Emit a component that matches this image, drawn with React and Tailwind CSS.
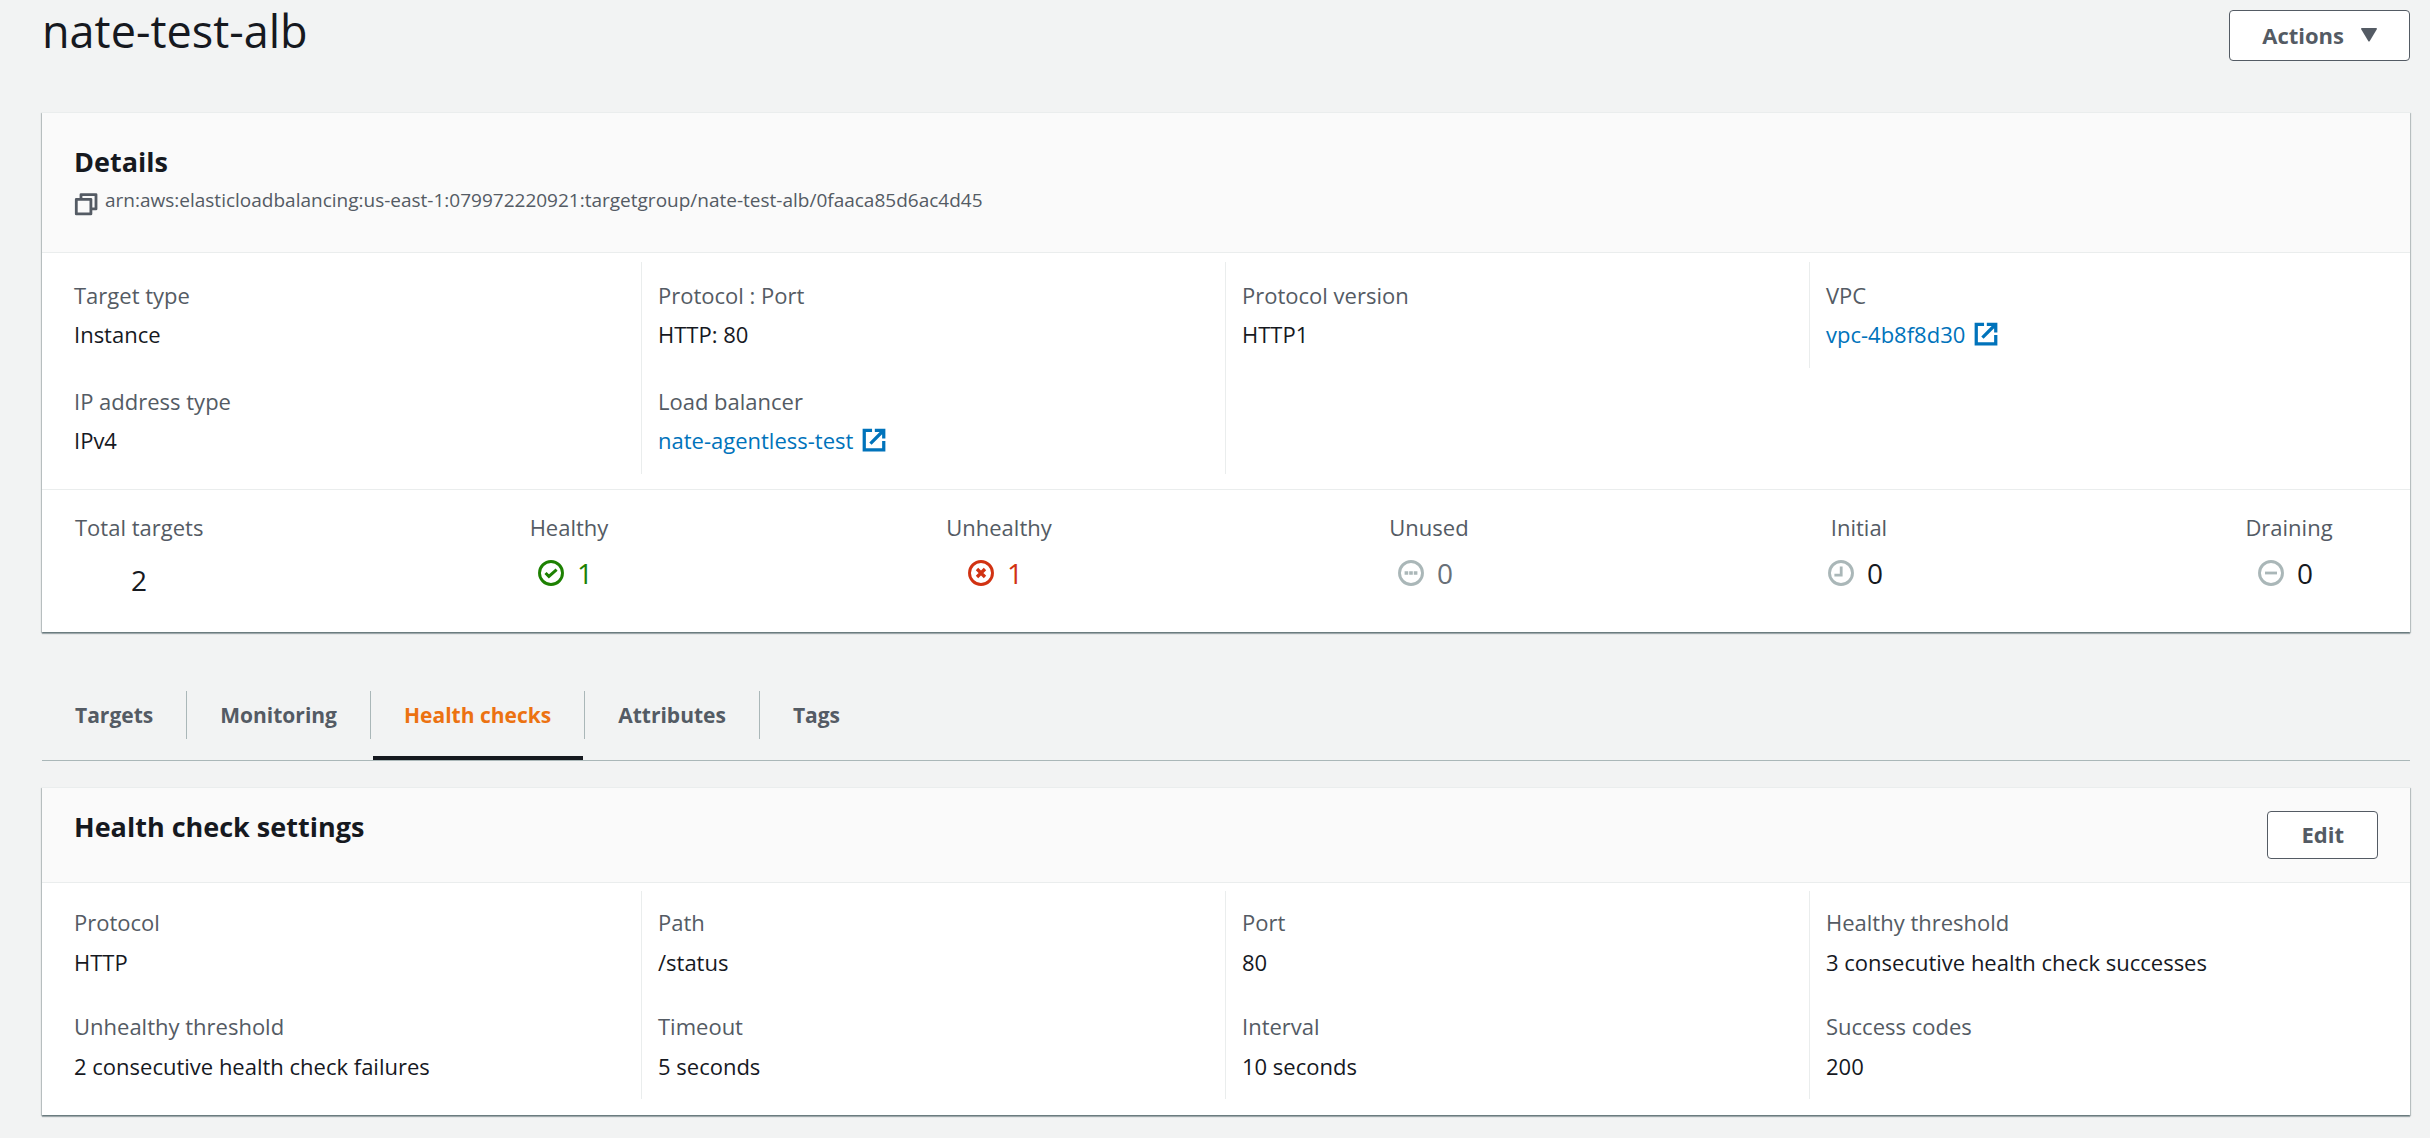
const detailItems = [
  { label: 'Target type', value: 'Instance' },
  { label: 'Protocol : Port', value: 'HTTP: 80' },
  { label: 'Protocol version', value: 'HTTP1' },
  { label: 'VPC', value: 'vpc-4b8f8d30', link: true },
  { label: 'IP address type', value: 'IPv4' },
  { label: 'Load balancer', value: 'nate-agentless-test', link: true },
  null,
];

const healthItems = [
  { label: 'Protocol', value: 'HTTP' },
  { label: 'Path', value: '/status' },
  { label: 'Port', value: '80' },
  { label: 'Healthy threshold', value: '3 consecutive health check successes' },
  { label: 'Unhealthy threshold', value: '2 consecutive health check failures' },
  { label: 'Timeout', value: '5 seconds' },
  { label: 'Interval', value: '10 seconds' },
  { label: 'Success codes', value: '200' },
];

const stats = [
  { label: 'Healthy', value: 1, icon: 'check', iconColor: 'text-[#1d8102]', color: 'text-[#1d8102]' },
  { label: 'Unhealthy', value: 1, icon: 'cross', iconColor: 'text-[#d13212]', color: 'text-[#d13212]' },
  { label: 'Unused', value: 0, icon: 'dots', iconColor: 'text-[#aab7b8]', color: 'text-[#687078]' },
  { label: 'Initial', value: 0, icon: 'clock', iconColor: 'text-[#aab7b8]', color: 'text-[#16191f]' },
  { label: 'Draining', value: 0, icon: 'minus', iconColor: 'text-[#aab7b8]', color: 'text-[#16191f]' },
];

const tabs = ['Targets', 'Monitoring', 'Health checks', 'Attributes', 'Tags'];

const glyphs = {
  check: <path d="M7.5 13l3.4 3.4L18.6 9.6" strokeWidth="3" />,
  cross: <path d="M9 9l8 8M17 9l-8 8" strokeWidth="3.4" />,
  dots: <path d="M6.6 13h3.6M11.2 13h3.6M15.8 13h3.6" strokeWidth="3.4" />,
  clock: <path d="M13.2 6.4v8.8M14.6 15.2H6.4" strokeWidth="2.8" />,
  minus: <path d="M7 13h12" strokeWidth="2.8" />,
};

function StatusIcon({ name, className }) {
  return (
    <svg aria-hidden="true" className={`size-[26px] ${className}`} viewBox="0 0 26 26" fill="none" stroke="currentColor">
      <circle cx="13" cy="13" r="11.5" strokeWidth="2.9" />
      {glyphs[name]}
    </svg>
  );
}

function ExternalIcon() {
  return (
    <svg aria-hidden="true" className="size-[26px]" viewBox="0 0 16 16" fill="none" stroke="currentColor" strokeWidth="2">
      <path d="M6.8 2H2v12h12V8.6" />
      <path d="M8.5 2H14v5M14 2L5.8 10.2" />
    </svg>
  );
}

function CopyIcon() {
  return (
    <svg aria-hidden="true" className="size-6" viewBox="0 0 24 24" fill="none" stroke="currentColor" strokeWidth="2.8" strokeLinejoin="round">
      <rect x="2.3" y="7.3" width="14.6" height="14.6" />
      <path d="M7 6.5V2.6h15v14.3h-4" />
    </svg>
  );
}

function Card({ children }) {
  return (
    <section className="border-t border-[#eaeded] bg-white shadow-[0_2px_1px_0_rgba(0,28,36,0.3),1px_1px_1px_0_rgba(0,28,36,0.2),-1px_1px_1px_0_rgba(0,28,36,0.2)]">
      {children}
    </section>
  );
}

function Field({ item, className }) {
  return (
    <div className={`border-l border-[#eaeded] px-4 ${className}`}>
      {item && (
        <>
          <dt className="text-[#545b64]">{item.label}</dt>
          <dd>
            {item.link ? (
              <a href="#" className="inline-flex items-center gap-2 text-[#0073bb]">
                {item.value}
                <ExternalIcon />
              </a>
            ) : (
              item.value
            )}
          </dd>
        </>
      )}
    </div>
  );
}

function FieldGrid({ items, className, fieldClassName }) {
  return (
    <dl className={`grid grid-cols-4 pr-[17px] pl-[15px] ${className}`}>
      {items.map((item, i) => (
        <Field
          key={i}
          item={item}
          className={`${fieldClassName} ${i % 4 === 0 ? 'border-l-transparent' : ''}`}
        />
      ))}
    </dl>
  );
}

export default function App() {
  return (
    <main className="min-h-screen bg-[#f2f3f3] pr-5 pb-5 pl-[42px] font-['Open_Sans','Noto_Sans',sans-serif] text-[22px] leading-8 text-[#16191f]">
      <header className="flex items-start justify-between pt-1 pb-[51px]">
        <h1 className="text-[45px] leading-[54px]">nate-test-alb</h1>
        <button type="button" className="mt-1.5 flex h-[51px] items-center gap-[17px] rounded border border-[#545b64] bg-white px-8 pb-0.5 font-bold text-[#545b64]">
          Actions
          <svg aria-hidden="true" className="h-[14px] w-4" viewBox="0 0 16 14" fill="currentColor">
            <path d="M1 0h14q1.400 0 .8 1.300L8.800 13q-.8 1.200-1.600 0L.2 1.300Q-.4 0 1 0z" />
          </svg>
        </button>
      </header>

      <Card>
        <div className="border-b border-[#eaeded] bg-[#fafafa] px-8 pt-[33px] pb-9">
          <h2 className="text-[27px] leading-8 font-bold">Details</h2>
          <div className="mt-2 flex text-[19px] leading-7 text-[#545b64]">
            <button type="button" aria-label="Copy ARN" className="mt-[6px] mr-[7px] h-6">
              <CopyIcon />
            </button>
            <span>arn:aws:elasticloadbalancing:us-east-1:079972220921:targetgroup/nate-test-alb/0faaca85d6ac4d45</span>
          </div>
        </div>
        <FieldGrid
          items={detailItems}
          className="pt-[9px] pb-[15px]"
          fieldClassName="flex flex-col gap-[7px] pt-[17px] pb-[18px]"
        />
        <div className="flex justify-between border-t border-[#eaeded] pt-[21px] pr-[57px] pb-8 pl-[33px] text-center">
          <div className="w-32">
            <div className="whitespace-nowrap text-[#545b64]">Total targets</div>
            <div className="mt-[17px] text-[28px] leading-10">2</div>
          </div>
          {stats.map((s) => (
            <div key={s.label} className="w-32">
              <div className="text-[#545b64]">{s.label}</div>
              <div className={`mt-2.5 flex items-center justify-center gap-[13px] pr-[7px] text-[28px] leading-10 ${s.color}`}>
                <StatusIcon name={s.icon} className={s.iconColor} />
                {s.value}
              </div>
            </div>
          ))}
        </div>
      </Card>

      <div role="tablist" className="mt-[59px] mb-[26px] flex border-b border-[#aab7b8] text-[21px] font-bold text-[#545b64]">
        {tabs.map((tab, i) => {
          const active = tab === 'Health checks';
          return (
            <button key={tab} type="button" role="tab" aria-selected={active} className={active ? 'text-[#ec7211]' : ''}>
              <span className={`block px-[33px] py-2 ${i < tabs.length - 1 ? 'border-r border-[#aab7b8]' : ''}`}>{tab}</span>
              <span className={`mx-0.5 mt-[17px] block h-1 ${active ? 'bg-[#16191f]' : ''}`} />
            </button>
          );
        })}
      </div>

      <Card>
        <div className="flex items-start justify-between border-b border-[#eaeded] bg-[#fafafa] px-8 pt-[23px] pb-[23px]">
          <h2 className="text-[27px] leading-8 font-bold">Health check settings</h2>
          <button type="button" className="flex h-12 items-center rounded border border-[#545b64] bg-white px-[33px] pb-0.5 font-bold text-[#545b64]">
            Edit
          </button>
        </div>
        <FieldGrid
          items={healthItems}
          className="pt-2 pb-4"
          fieldClassName="flex flex-col gap-2 pt-[15px] pb-[17px]"
        />
      </Card>
    </main>
  );
}
